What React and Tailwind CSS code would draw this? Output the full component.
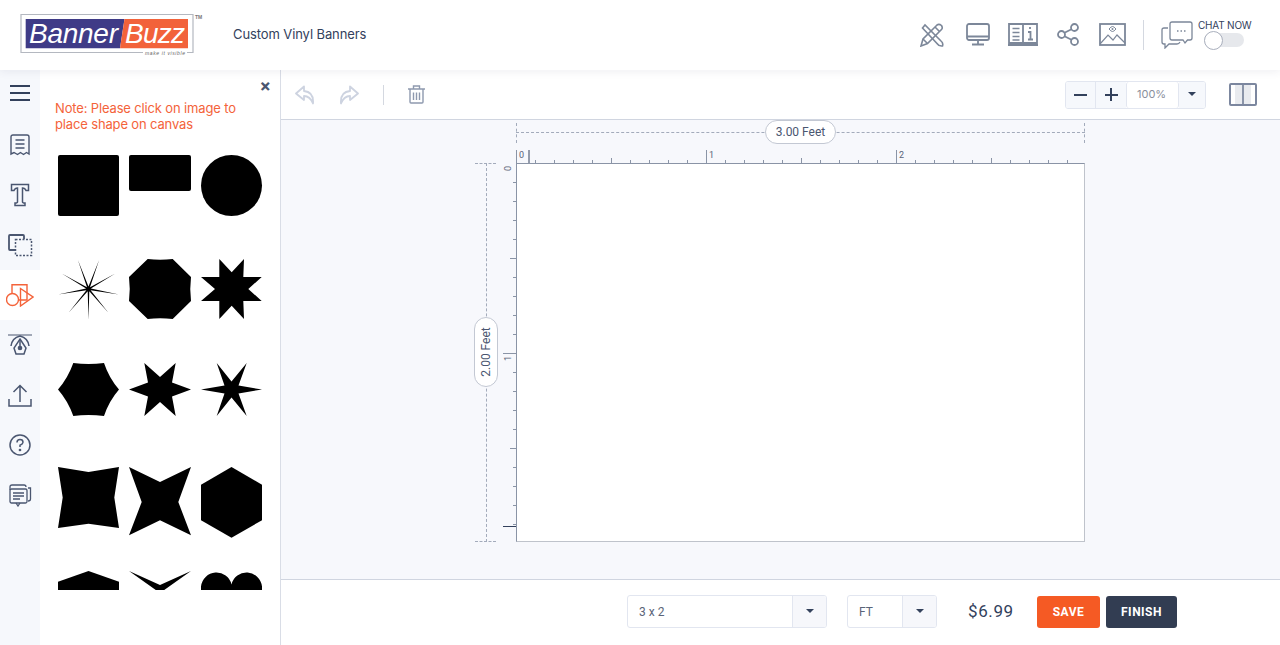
// App.jsx - BannerBuzz 디자인 툴 화면

import React from "react";

const POP = "font-['Inter','Open_Sans',sans-serif]";
const ROB = "font-['Roboto','Liberation_Sans',sans-serif]";

// 별 모양 좌표 계산
const starPoints = (cx, cy, R, r, n, rot) => {
  const pts = [];
  for (let i = 0; i < n * 2; i++) {
    const a = rot + (i * Math.PI) / n;
    const rad = i % 2 === 0 ? R : r;
    pts.push(`${(cx + rad * Math.cos(a)).toFixed(1)},${(cy + rad * Math.sin(a)).toFixed(1)}`);
  }
  return pts.join(" ");
};

const shapes = [
  { h: 61, el: <rect width="61" height="61" rx="2" /> },
  { h: 36, el: <rect width="62" height="36" rx="2" /> },
  { h: 61, el: <circle cx="30.5" cy="30.5" r="30.5" /> },
  { h: 60, el: <polygon points={starPoints(30.5, 30, 31, 2.4, 9, Math.PI / 2)} /> },
  { h: 60, el: <path d="M18.7 0Q31 1.5 43.7 0L62 18Q60.5 30 62 42L43.7 60Q31 58.5 18.7 60L0 42Q1.5 30 0 18Z" /> },
  { h: 60, el: <polygon points="18.3,0 30.7,13.3 43,0 42.3,18 60.7,18 47.3,30 60.7,42 42.3,42 43,60 30.7,46.7 18.3,60 18.3,42 0,42 14,30 0,18 18.3,18" /> },
  { h: 53, el: <path d="M15.3 0Q30.5 2 46 0Q51 15 61 26.5Q51 38 46 53Q30.5 51 15.3 53Q10 38 0 26.5Q10 15 15.3 0Z" /> },
  { h: 53, el: <polygon points="15.3,0 31,14 46.7,0 43,19.5 62,26.5 43,33.5 46.7,53 31,39 15.3,53 19,33.5 0,26.5 19,19.5" /> },
  { h: 53, el: <polygon points="15.7,0 30.5,18.5 45.7,0 37.5,22.5 61,26.5 37.5,30.5 45.7,53 30.5,34.5 15.7,53 23.5,30.5 0,26.5 23.5,22.5" /> },
  { h: 61, el: <polygon points="0,0 30.5,5 61,0 56.3,30.5 61,61 30.5,56.7 0,61 4.7,30.5" /> },
  { h: 69, el: <polygon points="0,0 31,15 62,0 49.3,35 62,68.3 31,53.3 0,68.3 12.7,35" /> },
  { h: 71, el: <polygon points="30.5,0 61,17.7 61,53.3 30.5,70.7 0,53.3 0,17.7" /> },
  { h: 40, el: <polygon points="30.5,0 61,10.7 61,40 0,40 0,10.7" /> },
  { h: 30, el: <polygon points="0,0 31,14 62,0 31,22" /> },
  { h: 40, el: <path d="M0 15.5A15.5 15.5 0 0 1 30.5 13.5A15.5 15.5 0 0 1 61 15.5L61 40L0 40Z" /> },
];

const MenuIcon = () => (
  <svg width="20" height="16" viewBox="0 0 20 16" stroke="#33415c" strokeWidth="2"><path d="M0 1H20M0 8H20M0 15H20" /></svg>
);
const ReceiptIcon = () => (
  <svg width="20" height="22" viewBox="0 0 20 22" fill="none" stroke="#4a5670" strokeWidth="1.4">
    <path d="M1 20V3Q1 1 3 1H17Q19 1 19 3V20L16.5 18.5L13.5 20.5L10.5 18.5L7.5 20.5L4 18.5Z" />
    <path d="M5.5 6H14.5M5.5 10H14.5M5.5 14H14.5" />
  </svg>
);
const TextIcon = () => (
  <svg width="20" height="24" viewBox="0 0 20 24" fill="none" stroke="#4a5670" strokeWidth="1.5">
    <path d="M1.5 1.5H18.5V7.5H16Q15 5 12.5 5V19Q12.5 20 15 20V22.5H5V20Q7.5 20 7.5 19V5Q5 5 4 7.5H1.5Z" />
  </svg>
);
const LayersIcon = () => (
  <svg width="25" height="23" viewBox="0 0 25 23" fill="none" stroke="#4a5670">
    <path d="M7 16H2Q1 16 1 15V2Q1 1 2 1H15Q16 1 16 2V5" strokeWidth="1.8" />
    <rect x="7.5" y="5.5" width="16" height="16" strokeWidth="1.5" strokeDasharray="2 1.5" />
  </svg>
);
const ShapesIcon = () => (
  <svg width="28" height="23" viewBox="0 0 28 23" fill="none" stroke="#f4633a" strokeWidth="1.4">
    <path d="M6 9V0.7H21V16H13" />
    <circle cx="6.5" cy="15.5" r="6" />
    <path d="M14.5 4.5L27 13L14.5 22Z" />
  </svg>
);
const PenIcon = () => (
  <svg width="26" height="24" viewBox="0 0 26 24" fill="none" stroke="#4a5670" strokeWidth="1.5">
    <path d="M1 2H25" strokeWidth="1" />
    <path d="M4 13Q5 5 13 3Q21 5 22 13" />
    <path d="M13 6L19 15L17 21H9L7 15Z" />
    <circle cx="13" cy="15" r="1.6" fill="#4a5670" />
    <path d="M13 6V13" />
  </svg>
);
const UploadIcon = () => (
  <svg width="24" height="23" viewBox="0 0 24 23" fill="none" stroke="#4a5670" strokeWidth="1.5">
    <path d="M1 15V22H23V15M12 18V2M5.5 8L12 1.5L18.5 8" />
  </svg>
);
const HelpIcon = () => (
  <svg width="22" height="22" viewBox="0 0 22 22" fill="none" stroke="#4a5670" strokeWidth="1.5">
    <circle cx="11" cy="11" r="10" />
    <path d="M8 8.5Q8 5.5 11 5.5Q14 5.5 14 8.2Q14 9.8 11 11.2V13" />
    <circle cx="11" cy="16" r="0.6" />
  </svg>
);
const NotesIcon = () => (
  <svg width="23" height="23" viewBox="0 0 23 23" fill="none" stroke="#4a5670" strokeWidth="1.3">
    <path d="M1 6V3Q1 1 3 1H15Q17 1 17 3" />
    <path d="M19 4H21.5V15Q21.5 17 19 17" />
    <rect x="1" y="5" width="17" height="14" rx="1.5" />
    <path d="M7 19L9 22L11 19M4 9H15M4 12H15M4 15H11" />
  </svg>
);

const sideItems = [
  <MenuIcon />, <ReceiptIcon />, <TextIcon />, <LayersIcon />, <ShapesIcon />,
  <PenIcon />, <UploadIcon />, <HelpIcon />, <NotesIcon />,
];

// 상단 아이콘
const H = "#7c8799";
const ToolsIcon = () => (
  <svg width="24" height="24" viewBox="0 0 24 24" fill="none" stroke={H} strokeWidth="1.6">
    <path d="M1 23L3 16L17 2Q19 0.5 21.5 2.5Q23 5 21.5 6.5L7.5 20.5Z" />
    <path d="M3 16L7.5 20.5M15 4L19.5 8.5" />
    <path d="M2.5 5L5 2L21 18Q23.5 20 22.5 23Q19 23.5 17 20.5L2.5 5Z" />
  </svg>
);
const MonitorIcon = () => (
  <svg width="24" height="23" viewBox="0 0 24 23" fill="none" stroke={H} strokeWidth="1.8">
    <rect x="1" y="1" width="22" height="16" rx="2" />
    <path d="M1 13.5H23M12 17V21M6 21.5H18" />
  </svg>
);
const BookIcon = () => (
  <svg width="30" height="23" viewBox="0 0 30 23" fill="none" stroke={H} strokeWidth="1.8">
    <path d="M1 1H15V20H1ZM15 1H29V20H15ZM0 22H30" />
    <path d="M4.5 5.5H11.5M4.5 9.5H11.5M4.5 13.5H11.5M4.5 17H11.5" strokeWidth="1.5" />
    <path d="M22 4V6M20 9H22.5V16M20 16.5H25" strokeWidth="1.8" />
  </svg>
);
const ShareIcon = () => (
  <svg width="23" height="23" viewBox="0 0 23 23" fill="none" stroke={H} strokeWidth="1.8">
    <circle cx="17.5" cy="4.5" r="3.5" />
    <circle cx="4.5" cy="11.5" r="3.5" />
    <circle cx="17.5" cy="18.5" r="3.5" />
    <path d="M7.5 9.8L14.5 6.2M7.5 13.2L14.5 16.8" />
  </svg>
);
const ImageIcon = () => (
  <svg width="27" height="23" viewBox="0 0 27 23" fill="none" stroke={H} strokeWidth="1.8">
    <rect x="1" y="1" width="25" height="21" />
    <path d="M1 21L9 12L14 17L18 12L26 20" strokeWidth="1.2" />
    <path d="M10 6Q12 3.5 13.5 3.5Q15 3.5 17 6Q15 8.5 13.5 8.5Q12 8.5 10 6Z" strokeWidth="1" />
    <circle cx="13.5" cy="6" r="1" fill={H} stroke="none" />
  </svg>
);
const ChatIcon = () => (
  <svg width="32" height="28" viewBox="0 0 32 28" fill="none" stroke={H} strokeWidth="1.3">
    <path d="M9 3Q9 1 11 1H29Q31 1 31 3V17Q31 19 29 19H26.5L24 22L22 19H11Q9 19 9 17Z" />
    <path d="M7 7H3Q1 7 1 9V21Q1 23 3 23H4V27L8 23H16Q18 23 19 21" />
    <path d="M16 10H17.5M19.5 10H21M23 10H24.5" strokeWidth="1.6" />
  </svg>
);

const ReplyIcon = ({ flip }) => (
  <svg width="20" height="20" viewBox="0 0 20 20" fill="none" stroke="#cdd3e0" strokeWidth="1.8" strokeLinejoin="round" className={flip ? "-scale-x-100" : ""}>
    <path d="M9 1.5L1 8.5L9 15V11Q15 11 18 18.5Q19 7 9 6Z" />
  </svg>
);
const TrashIcon = () => (
  <svg width="17" height="19" viewBox="0 0 17 19" fill="none" stroke="#8e99ae" strokeWidth="1.4">
    <path d="M0 4H17M5.5 4V1H11.5V4M2 4V17Q2 18 3 18H14Q15 18 15 17V4" />
    <path d="M5.5 7.5V15M8.5 7.5V15M11.5 7.5V15" />
  </svg>
);

const Caret = () => <span className="-mt-[2px] w-0 h-0 border-x-[4px] border-x-transparent border-t-[4px] border-t-[#33415c]" />;

// 상단 가로 자
const TopRuler = () => {
  const ticks = [];
  for (let i = 1; i < 30; i++) {
    const x = i * 19;
    const len = i % 10 === 0 ? 13 : i % 5 === 0 ? 5 : 3;
    ticks.push(<path key={i} d={`M${x + 0.5} 14V${14 - len}`} stroke="#8a94a6" />);
  }
  return (
    <svg width="569" height="14" className="block">
      <path d="M0.5 1V14" stroke="#8a94a6" />
      <path d="M13 1V14" stroke="#33415c" />
      {ticks}
      <text x="3" y="9" fontSize="9" fill="#5a6478" fontFamily="Roboto">0</text>
      <text x="193" y="9" fontSize="9" fill="#5a6478" fontFamily="Roboto">1</text>
      <text x="383" y="9" fontSize="9" fill="#5a6478" fontFamily="Roboto">2</text>
    </svg>
  );
};

// 왼쪽 세로 자
const LeftRuler = () => {
  const ticks = [];
  for (let i = 1; i < 20; i++) {
    const y = i * 19;
    const len = i % 10 === 0 ? 13 : i % 5 === 0 ? 6 : 3;
    ticks.push(<path key={i} d={`M14 ${y + 0.5}H${14 - len}`} stroke="#8a94a6" />);
  }
  return (
    <svg width="14" height="379" className="block">
      {ticks}
      <path d="M1 363.5H14" stroke="#33415c" />
      <text transform="translate(9 8) rotate(-90)" fontSize="9" fill="#5a6478" fontFamily="Roboto">0</text>
      <text transform="translate(9 198) rotate(-90)" fontSize="9" fill="#5a6478" fontFamily="Roboto">1</text>
    </svg>
  );
};

export default function App() {
  return (
    <div className={`w-full h-[645px] overflow-hidden flex flex-col bg-white ${POP}`}>
      {/* 상단 헤더 */}
      <header className="relative z-10 h-[70px] flex items-center bg-white shadow-[0_2px_8px_rgba(60,70,100,0.08)]">
        <svg width="184" height="44" viewBox="0 0 184 44" className="ml-5 mt-[2px] shrink-0">
          <path d="M123 38.5H1V0.5H173V38.5H167" fill="none" stroke="#b4b8c0" strokeWidth="1.2" />
          <polygon points="5.7,5 104.5,5 100,34.3 5.7,34.3" fill="#3f3b87" />
          <polygon points="104.5,5 168,5 168,34.3 100,34.3" fill="#f2623a" />
          <text x="9" y="29" fontFamily="Liberation Sans" fontStyle="italic" fontSize="28" fill="#fff" textLength="89">Banner</text>
          <text x="105" y="29" fontFamily="Liberation Sans" fontStyle="italic" fontSize="28" fill="#fff" textLength="60">Buzz</text>
          <text x="125" y="40.5" fontFamily="Liberation Sans" fontStyle="italic" fontSize="5" fill="#666" textLength="40">make it visible</text>
          <text x="175" y="5" fontFamily="Liberation Sans" fontSize="5" fontWeight="700" fill="#777">TM</text>
        </svg>
        <span className="ml-[29px] text-[13px] tracking-[-0.1px] text-[#33415c]">Custom Vinyl Banners</span>
        <div className="ml-auto -mt-[1px] flex items-center">
          <div className="mr-[22px]"><ToolsIcon /></div>
          <div className="mr-[18px]"><MonitorIcon /></div>
          <div className="mr-[19px]"><BookIcon /></div>
          <div className="mr-[19px]"><ShareIcon /></div>
          <div className="mr-[17px]"><ImageIcon /></div>
          <div className="w-px h-[30px] bg-[#d4d8e0] mr-[17px]" />
          <div className="mt-[1px] mr-[5px]"><ChatIcon /></div>
          <div className="w-[60px] mr-[22px] flex flex-col items-start -mt-[4px]">
            <span className="text-[10px] leading-[12px] -tracking-[0.2px] text-[#33415c] whitespace-nowrap">CHAT NOW</span>
            <div className="relative ml-[6px] mt-[2px] w-[40px] h-[14px] rounded-full bg-[#e6e8ec]">
              <span className="absolute left-0 -top-[2px] w-[19px] h-[19px] rounded-full bg-white border border-[#a9afbd]" />
            </div>
          </div>
        </div>
      </header>

      <div className="flex flex-1 min-h-0">
        {/* 왼쪽 메뉴 */}
        <nav className="w-10 shrink-0 bg-[#f6f8fc] flex flex-col">
          {sideItems.map((icon, i) => (
            <div key={i} className={`h-[50px] shrink-0 flex items-center justify-center ${i === 4 ? "bg-white" : ""} ${i === 0 ? "pb-[4px]" : ""}`}>
              {icon}
            </div>
          ))}
        </nav>

        {/* 도형 패널 */}
        <aside className="relative w-[241px] shrink-0 bg-white border-r border-[#d9dde6] pl-[15px] pt-[30px]">
          <span className="absolute right-[9px] top-[7px] text-[#4a5670] text-[17px] leading-[18px] font-bold">×</span>
          <p className="text-[13px] leading-[16px] tracking-[-0.15px] text-[#f4633a]">
            Note: Please click on image to<br />place shape on canvas
          </p>
          <div className="mt-[23px] ml-[3px] h-[435px] overflow-hidden grid grid-cols-[61px_62px_61px] gap-x-[10px] auto-rows-[104px]">
            {shapes.map((s, i) => (
              <svg key={i} width="62" height={s.h} viewBox={`0 0 62 ${s.h}`} fill="#000" className="block">{s.el}</svg>
            ))}
          </div>
        </aside>

        {/* 작업 영역 */}
        <main className="flex-1 min-w-0 flex flex-col bg-[#f7f8fc]">
          <div className="h-[50px] shrink-0 bg-white border-b border-[#d0d5e0] flex items-center pl-[14px]">
            <ReplyIcon />
            <div className="ml-[24px]"><ReplyIcon flip /></div>
            <div className="w-px h-5 bg-[#d4d8e0] ml-[24px]" />
            <div className="ml-[24px]"><TrashIcon /></div>
            <div className="ml-auto mr-[23px] flex h-[28px] w-[141px] border border-[#e2e6f0] rounded-[3px] overflow-hidden">
              <div className="w-[30px] bg-[#f6f8fc] border-r border-[#e2e6f0] flex items-center justify-center text-[#33415c]">
                <span className="w-[13px] h-[2px] bg-[#33415c]" />
              </div>
              <div className="relative w-[30px] bg-[#f6f8fc] flex items-center justify-center">
                <span className="w-[13px] h-[2px] bg-[#33415c]" />
                <span className="absolute w-[2px] h-[13px] bg-[#33415c]" />
              </div>
              <div className="flex-1 flex items-center pl-[10px] text-[11px] text-[#8a8f9c] border-x border-[#e2e6f0] rounded-[3px]">100%</div>
              <div className="w-[26px] bg-[#f6f8fc] flex items-center justify-center"><Caret /></div>
            </div>
            <div className="mr-[23px] w-[28px] h-[23px] border-[2px] border-[#7c879f] rounded-[2px] flex items-center justify-center">
              <div className="w-[16px] h-full bg-[#e9ebef] flex justify-center"><span className="w-[2px] h-full bg-[#8a94a8]" /></div>
            </div>
          </div>

          {/* 캔버스 */}
          <div className="flex-1 flex justify-center pr-[2px]">
            <div className="grid grid-cols-[42px_569px] grid-rows-[43px_379px]">
              <div className="relative">
                <span className="absolute left-[1px] -bottom-[1px] w-[21px] border-t border-dashed border-[#a3abbb]" />
              </div>
              <div className="flex flex-col">
                <div className="relative h-[29px]">
                  <span className="absolute left-0 top-[3px] h-[20px] border-l border-dashed border-[#a3abbb]" />
                  <span className="absolute right-0 top-[3px] h-[20px] border-l border-dashed border-[#a3abbb]" />
                  <span className="absolute left-0 right-0 top-[12px] border-t border-dashed border-[#a3abbb]" />
                  <span className={`absolute left-[249px] top-0 w-[71px] h-[24px] rounded-full border border-[#c3c8d3] bg-white flex items-center justify-center text-[12px] text-[#4a5670] ${ROB}`}>3.00 Feet</span>
                </div>
                <TopRuler />
              </div>
              <div className="relative">
                <span className="absolute left-[12px] top-0 bottom-0 border-l border-dashed border-[#a3abbb]" />
                <span className="absolute left-[1px] bottom-0 w-[21px] border-t border-dashed border-[#a3abbb]" />
                <span className={`absolute left-0 top-[154px] w-[24px] h-[70px] rounded-full border border-[#c3c8d3] bg-white flex items-center justify-center ${ROB}`}>
                  <span className="-rotate-90 whitespace-nowrap text-[12px] text-[#4a5670]">2.00 Feet</span>
                </span>
                <div className="absolute right-0 top-0"><LeftRuler /></div>
              </div>
              <div className="bg-white border-l border-l-[#8a94a6] border-t border-t-[#8a94a6] border-r border-r-[#bfc3cb] border-b border-b-[#bfc3cb]" />
            </div>
          </div>

          {/* 하단 바 */}
          <div className={`h-[66px] shrink-0 bg-white border-t border-[#d0d5e0] pb-[2px] flex items-center justify-end pr-[103px] ${ROB}`}>
            <div className="flex h-[33px] w-[200px] border border-[#e2e6f0] rounded-[3px] overflow-hidden">
              <div className="flex-1 flex items-center pl-[11px] text-[12px] text-[#5a6478]">3 x 2</div>
              <div className="w-[34px] bg-[#f6f7fb] border-l border-[#e2e6f0] flex items-center justify-center"><Caret /></div>
            </div>
            <div className="ml-[20px] flex h-[33px] w-[90px] border border-[#e2e6f0] rounded-[3px] overflow-hidden">
              <div className="flex-1 flex items-center pl-[11px] text-[12px] text-[#5a6478]">FT</div>
              <div className="w-[34px] bg-[#f6f7fb] border-l border-[#e2e6f0] flex items-center justify-center"><Caret /></div>
            </div>
            <span className="ml-[31px] w-[69px] text-[17px] tracking-[0.6px] text-[#33415c]">$6.99</span>
            <button className="w-[63px] h-[32px] rounded-[3px] bg-[#f55a24] text-white text-[12px] font-bold tracking-[0.5px]">SAVE</button>
            <button className="ml-[6px] w-[71px] h-[32px] rounded-[3px] bg-[#323d52] text-white text-[12px] font-bold tracking-[0.5px]">FINISH</button>
          </div>
        </main>
      </div>
    </div>
  );
}
